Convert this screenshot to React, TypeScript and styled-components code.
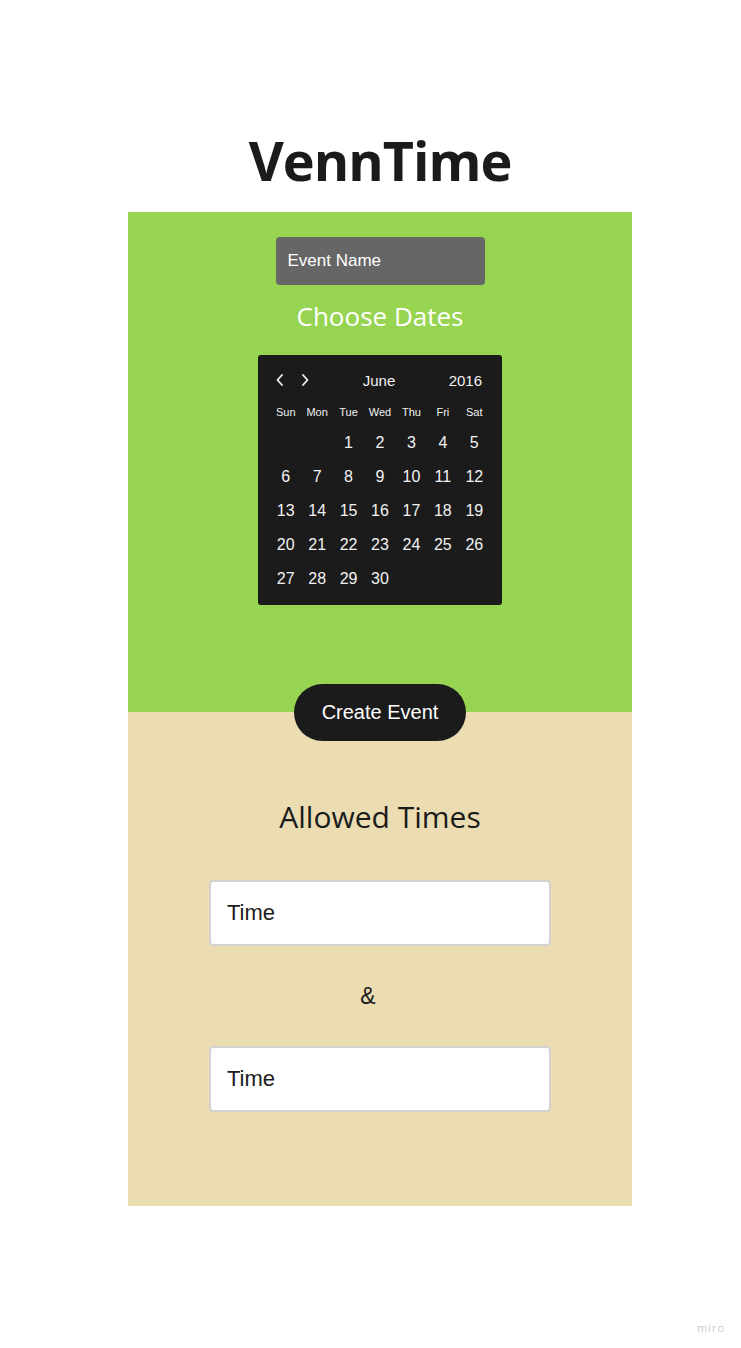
import { FunctionComponent } from 'react';
import styled, { createGlobalStyle } from 'styled-components';

const GlobalStyle = createGlobalStyle`
  html, body {
    margin: 0;
    padding: 0;
    background: #ffffff;
  }
  * {
    box-sizing: border-box;
  }
`;

const WEEKDAYS = ['Sun', 'Mon', 'Tue', 'Wed', 'Thu', 'Fri', 'Sat'];
// the mockup puts the 1st under Tuesday
const LEADING_BLANKS = 2;
const DAYS_IN_MONTH = 30;

const Chevron: FunctionComponent<{ dir: 'left' | 'right' }> = ({ dir }) => (
  <svg width="8" height="12" viewBox="0 0 8 12" fill="none">
    <polyline
      points={dir === 'left' ? '6,1 1.5,6 6,11' : '2,1 6.5,6 2,11'}
      stroke="#f2f2f2"
      strokeWidth="1.8"
      strokeLinecap="round"
      strokeLinejoin="round"
    />
  </svg>
);

const Calendar: FunctionComponent = () => {
  const cells: (number | null)[] = [
    ...Array(LEADING_BLANKS).fill(null),
    ...Array.from({ length: DAYS_IN_MONTH }, (_, i) => i + 1),
  ];
  return (
    <CalendarBox>
      <CalHeader>
        <Arrows>
          <ArrowBtn>
            <Chevron dir="left" />
          </ArrowBtn>
          <ArrowBtn>
            <Chevron dir="right" />
          </ArrowBtn>
        </Arrows>
        <Month>June</Month>
        <Year>2016</Year>
      </CalHeader>
      <WeekRow>
        {WEEKDAYS.map((d) => (
          <WeekDay key={d}>{d}</WeekDay>
        ))}
      </WeekRow>
      <DayGrid>
        {cells.map((c, i) => (
          <Day key={i}>{c ?? ''}</Day>
        ))}
      </DayGrid>
    </CalendarBox>
  );
};

export default function App() {
  return (
    <>
      <GlobalStyle />
      <Page>
        <Title>VennTime</Title>
        <GreenPanel>
          <NameInput placeholder="Event Name" />
          <SectionTitle light>Choose Dates</SectionTitle>
          <Calendar />
        </GreenPanel>
        <CreateButton>Create Event</CreateButton>
        <BeigePanel>
          <SectionTitle>Allowed Times</SectionTitle>
          <TimeInput placeholder="Time" />
          <Amp>&amp;</Amp>
          <TimeInput placeholder="Time" />
        </BeigePanel>
      </Page>
      <Watermark>miro</Watermark>
    </>
  );
}

const Page = styled.div`
  width: 741px;
  min-height: 1348px;
  padding-left: 19px;
  display: flex;
  flex-direction: column;
  align-items: center;
`;

const Title = styled.h1`
  margin: 133px 0 25px;
  font-family: 'Open Sans', 'Noto Sans', sans-serif;
  font-weight: 700;
  font-size: 54px;
  line-height: 54px;
  letter-spacing: -1px;
  color: #1b1b1b;
`;

const GreenPanel = styled.section`
  width: 504px;
  height: 500px;
  background: #97d452;
  display: flex;
  flex-direction: column;
  align-items: center;
  padding-top: 25px;
`;

const NameInput = styled.input`
  width: 209px;
  height: 48px;
  border: none;
  border-radius: 4px;
  background: #666666;
  padding: 0 12px;
  font-family: 'Liberation Sans', Arial, sans-serif;
  font-size: 17px;
  color: #ffffff;
  outline: none;
  &::placeholder {
    color: #ffffff;
  }
`;

const SectionTitle = styled.h2<{ light?: boolean }>`
  margin: 0;
  font-family: 'Open Sans', 'Noto Sans', sans-serif;
  font-weight: 400;
  color: ${(p) => (p.light ? '#ffffff' : '#1b1b1b')};
  font-size: ${(p) => (p.light ? '26px' : '30px')};
  line-height: ${(p) => (p.light ? '32px' : '40px')};
  padding: ${(p) => (p.light ? '15px 0 23px' : '85px 0 43px')};
`;

const CalendarBox = styled.div`
  width: 244px;
  height: 250px;
  background: #1b1b1b;
  border-radius: 3px;
  padding: 14px 12px 8px;
  font-family: 'Liberation Sans', Arial, sans-serif;
  color: #f2f2f2;
`;

const CalHeader = styled.div`
  display: grid;
  grid-template-columns: 1fr auto 1fr;
  align-items: center;
  height: 22px;
  padding: 0 8px 0 6px;
`;

const Arrows = styled.div`
  display: flex;
  gap: 17px;
  align-items: center;
`;

const ArrowBtn = styled.span`
  display: flex;
  align-items: center;
`;

const Month = styled.span`
  font-size: 15px;
`;

const Year = styled.span`
  font-size: 15px;
  text-align: right;
`;

const WeekRow = styled.div`
  display: grid;
  grid-template-columns: repeat(7, 1fr);
  height: 20px;
  margin-top: 11px;
  align-items: center;
`;

const WeekDay = styled.span`
  font-size: 11px;
  text-align: center;
`;

const DayGrid = styled.div`
  display: grid;
  grid-template-columns: repeat(7, 1fr);
  grid-auto-rows: 34px;
  margin-top: 4px;
`;

const Day = styled.span`
  display: flex;
  align-items: center;
  justify-content: center;
  font-size: 16px;
`;

const CreateButton = styled.button`
  position: relative;
  z-index: 1;
  width: 172px;
  height: 57px;
  margin: -28px 0 -29px;
  border: none;
  border-radius: 29px;
  background: #1b1b1b;
  color: #ffffff;
  font-family: 'Liberation Sans', Arial, sans-serif;
  font-size: 20px;
`;

const BeigePanel = styled.section`
  width: 504px;
  height: 494px;
  background: #ebdcb2;
  display: flex;
  flex-direction: column;
  align-items: center;
`;

const TimeInput = styled.input`
  width: 342px;
  height: 66px;
  border: 2px solid #d2d2d2;
  border-radius: 4px;
  background: #ffffff;
  padding: 0 16px;
  font-family: 'Liberation Sans', Arial, sans-serif;
  font-size: 22px;
  color: #1b1b1b;
  outline: none;
  &::placeholder {
    color: #1b1b1b;
  }
`;

const Amp = styled.div`
  height: 100px;
  display: flex;
  align-items: center;
  padding-right: 24px;
  font-family: 'Liberation Sans', Arial, sans-serif;
  font-size: 23px;
  color: #1b1b1b;
`;

const Watermark = styled.div`
  position: absolute;
  right: 16px;
  top: 1320px;
  font-family: 'Open Sans', sans-serif;
  font-size: 11px;
  letter-spacing: 1px;
  color: #c9c9d2;
`;
